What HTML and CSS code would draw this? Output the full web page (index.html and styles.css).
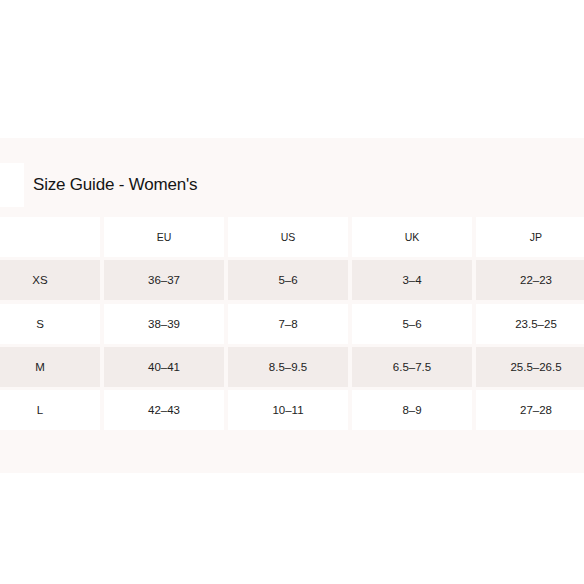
FILE: index.html
```html
<!DOCTYPE html>
<html lang="en">
<head>
<meta charset="utf-8">
<title>Size Guide - Women's</title>
<link rel="stylesheet" href="styles.css">
</head>
<body>
<section class="panel">
  <div class="title-row">
    <div class="title-tab"></div>
    <h2 class="title">Size Guide - Women's</h2>
  </div>
  <div class="grid">
    <div class="cell head"></div>
    <div class="cell head">EU</div>
    <div class="cell head">US</div>
    <div class="cell head">UK</div>
    <div class="cell head">JP</div>

    <div class="cell alt">XS</div>
    <div class="cell alt">36–37</div>
    <div class="cell alt">5–6</div>
    <div class="cell alt">3–4</div>
    <div class="cell alt">22–23</div>

    <div class="cell">S</div>
    <div class="cell">38–39</div>
    <div class="cell">7–8</div>
    <div class="cell">5–6</div>
    <div class="cell">23.5–25</div>

    <div class="cell alt">M</div>
    <div class="cell alt">40–41</div>
    <div class="cell alt">8.5–9.5</div>
    <div class="cell alt">6.5–7.5</div>
    <div class="cell alt">25.5–26.5</div>

    <div class="cell">L</div>
    <div class="cell">42–43</div>
    <div class="cell">10–11</div>
    <div class="cell">8–9</div>
    <div class="cell">27–28</div>
  </div>
</section>
</body>
</html>
```
FILE: styles.css
```css
html, body {
  margin: 0;
  padding: 0;
  background: #ffffff;
  overflow: hidden;
}
body {
  font-family: "Liberation Sans", Arial, sans-serif;
  color: #1f1f1f;
  width: 584px;
  height: 584px;
}
.panel {
  margin-top: 138px;
  height: 335px;
  background: #fcf8f7;
  padding-top: 25px;
  box-sizing: border-box;
  overflow: hidden;
}
.title-row {
  display: flex;
  align-items: center;
  gap: 9px;
  height: 44px;
}
.title-tab {
  width: 24px;
  height: 44px;
  background: #ffffff;
}
.title {
  margin: 0;
  font-size: 17px;
  font-weight: 400;
  color: #151515;
  letter-spacing: -0.2px;
}
.grid {
  margin-top: 10px;
  margin-left: -20px;
  display: grid;
  grid-template-columns: repeat(5, 120px);
  grid-auto-rows: 40px;
  column-gap: 4px;
  row-gap: 3.25px;
}
.cell {
  background: #ffffff;
  display: flex;
  align-items: center;
  justify-content: center;
  font-size: 11.5px;
  color: #222222;
}
.cell.head {
  font-size: 10.5px;
}
.cell.alt {
  background: #f2ecea;
}
```
